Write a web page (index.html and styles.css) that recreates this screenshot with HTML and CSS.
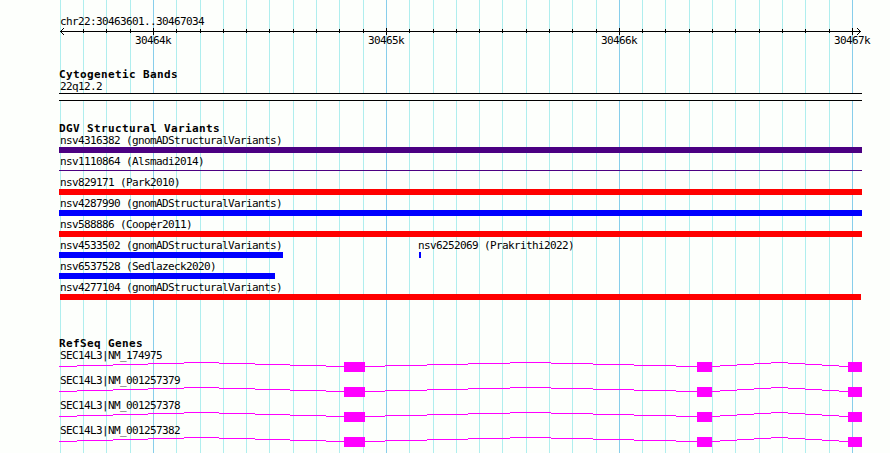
FILE: index.html
```html
<!DOCTYPE html>
<html lang="en">

<head>
    <meta charset="UTF-8">
    <title>chr22:30463601..30467034</title>
    <link rel="stylesheet" href="styles.css">
</head>

<body>
    <div class="browser">
        <!-- vertical grid, one line per 100 bp -->
        <svg class="grid" width="890" height="453" viewBox="0 0 890 453">
            <path class="minor" d="M60.5 0V453M83.5 0V453M106.5 0V453M130.5 0V453M176.5 0V453M200.5 0V453M223.5 0V453M246.5 0V453M269.5 0V453M293.5 0V453M316.5 0V453M339.5 0V453M363.5 0V453M409.5 0V453M433.5 0V453M456.5 0V453M479.5 0V453M502.5 0V453M526.5 0V453M549.5 0V453M572.5 0V453M596.5 0V453M642.5 0V453M665.5 0V453M689.5 0V453M712.5 0V453M735.5 0V453M759.5 0V453M782.5 0V453M805.5 0V453M829.5 0V453" />
            <path class="major" d="M153.5 0V453M386.5 0V453M619.5 0V453M852.5 0V453" />
        </svg>

        <div class="ruler">
            <div class="label">chr22:30463601..30467034</div>
            <svg class="axis" width="803" height="6" viewBox="59 28 803 6">
                <path d="M60 31.5H861" />
                <path d="M83.5 29v4M106.5 29v4M130.5 29v4M176.5 29v4M200.5 29v4M223.5 29v4M246.5 29v4M269.5 29v4M293.5 29v4M316.5 29v4M339.5 29v4M363.5 29v4M409.5 29v4M433.5 29v4M456.5 29v4M479.5 29v4M502.5 29v4M526.5 29v4M549.5 29v4M572.5 29v4M596.5 29v4M642.5 29v4M665.5 29v4M689.5 29v4M712.5 29v4M735.5 29v4M759.5 29v4M782.5 29v4M805.5 29v4M829.5 29v4" />
                <path d="M153.5 28v7M386.5 28v7M619.5 28v7M852.5 28v7" />
                <path d="M61 30.5h1M62 29.5h1M63 28.5h1M61 32.5h1M62 33.5h1M63 34.5h1M859 30.5h1M858 29.5h1M857 28.5h1M859 32.5h1M858 33.5h1M857 34.5h1" />
            </svg>
            <div class="ticks">
                <span>30464k</span>
                <span>30465k</span>
                <span>30466k</span>
                <span>30467k</span>
            </div>
        </div>

        <div class="track cyto">
            <div class="title">Cytogenetic Bands</div>
            <div class="label">22q12.2</div>
            <div class="band"></div>
        </div>

        <div class="track variants">
            <div class="title">DGV Structural Variants</div>
            <div class="row">
                <div class="feature full">
                    <div class="label">nsv4316382 (gnomADStructuralVariants)</div>
                    <div class="bar purple"></div>
                </div>
            </div>
            <div class="row">
                <div class="feature full">
                    <div class="label">nsv1110864 (Alsmadi2014)</div>
                    <div class="bar thin"></div>
                </div>
            </div>
            <div class="row">
                <div class="feature full">
                    <div class="label">nsv829171 (Park2010)</div>
                    <div class="bar red"></div>
                </div>
            </div>
            <div class="row">
                <div class="feature full">
                    <div class="label">nsv4287990 (gnomADStructuralVariants)</div>
                    <div class="bar blue"></div>
                </div>
            </div>
            <div class="row">
                <div class="feature full">
                    <div class="label">nsv588886 (Cooper2011)</div>
                    <div class="bar red"></div>
                </div>
            </div>
            <div class="row">
                <div class="feature nsv4533502">
                    <div class="label">nsv4533502 (gnomADStructuralVariants)</div>
                    <div class="bar blue"></div>
                </div>
                <div class="feature nsv6252069">
                    <div class="label">nsv6252069 (Prakrithi2022)</div>
                    <div class="bar blue"></div>
                </div>
            </div>
            <div class="row">
                <div class="feature nsv6537528">
                    <div class="label">nsv6537528 (Sedlazeck2020)</div>
                    <div class="bar blue"></div>
                </div>
            </div>
            <div class="row">
                <div class="feature full">
                    <div class="label">nsv4277104 (gnomADStructuralVariants)</div>
                    <div class="bar red inset"></div>
                </div>
            </div>
        </div>

        <div class="track genes">
            <div class="title">RefSeq Genes</div>
            <div class="label">SEC14L3|NM_174975</div>
            <svg class="gene" width="803" height="12" viewBox="59 0 803 12">
                <g id="transcript">
                    <path class="intron" d="M59 4.5H77M77 3.5H113M113 2.5H148M148 1.5H184M184 .5H219M219 1.5H255M255 2.5H290M290 3.5H326M326 4.5H344" />
                    <path class="intron" d="M365 4.5H385M385 3.5H427M427 2.5H468M468 1.5H510M510 .5H551M551 1.5H593M593 2.5H634M634 3.5H676M676 4.5H697" />
                    <path class="intron" d="M712 4.5H720M720 3.5H737M737 2.5H754M754 1.5H771M771 .5H788M788 1.5H805M805 2.5H822M822 3.5H839M839 4.5H848" />
                    <path class="exon" d="M344 0h21v10h-21zM697 0h15v10h-15zM848 0h14v10h-14z" />
                </g>
            </svg>
            <div class="label">SEC14L3|NM_001257379</div>
            <svg class="gene" width="803" height="12" viewBox="59 0 803 12"><use href="#transcript" /></svg>
            <div class="label">SEC14L3|NM_001257378</div>
            <svg class="gene" width="803" height="12" viewBox="59 0 803 12"><use href="#transcript" /></svg>
            <div class="label">SEC14L3|NM_001257382</div>
            <svg class="gene" width="803" height="12" viewBox="59 0 803 12"><use href="#transcript" /></svg>
        </div>
    </div>
</body>

</html>
```
FILE: styles.css
```css
body {
    margin: 0;
    background-color: #fdfffc;
    color: #000;
    font-family: "DejaVu Sans Mono", monospace;
    font-size: 11px;
    line-height: 13px;
}

svg {
    display: block;
    shape-rendering: crispEdges;
}

.browser {
    position: relative;
    box-sizing: border-box;
    width: 890px;
    height: 453px;
    padding: 15px 28px 0 59px;
    overflow: hidden;
}

/* Grid behind the tracks */
.grid {
    position: absolute;
    top: 0;
    left: 0;
    z-index: -1;
}

.minor {
    stroke: #afeeee;
}

.major {
    stroke: #87ceeb;
}

/* Text */
.label,
.ticks {
    height: 13px;
    letter-spacing: -0.622px;
    white-space: nowrap;
}

.label {
    padding-left: 1px;
}

.title {
    height: 12px;
    font-weight: bold;
    letter-spacing: 0.378px;
    white-space: nowrap;
}

/* Ruler */
.axis {
    overflow: visible;
    stroke: #000;
}

.ticks {
    display: flex;
    gap: 197px;
    padding-left: 76px;
}

.ticks span {
    flex: none;
    width: 36px;
}

/* Tracks */
.cyto {
    margin-top: 21px;
}

.variants {
    margin-top: 21px;
}

.genes {
    margin-top: 35px;
}

.band {
    height: 6px;
    border-top: 1px solid #000;
    border-bottom: 1px solid #000;
    background-color: #fdfffc;
}

/* Structural variants */
.row {
    display: flex;
    height: 21px;
}

.feature {
    flex: none;
}

.full {
    width: 803px;
}

.nsv4533502 {
    width: 224px;
}

.nsv6252069 {
    width: 3px;
    margin-left: 135px;
}

.nsv6252069 .label {
    padding-left: 0;
}

.nsv6252069 .bar {
    margin-left: 1px;
}

.nsv6537528 {
    width: 216px;
}

.bar {
    height: 6px;
}

.purple {
    background-color: #4b0082;
}

.red {
    background-color: #ff0000;
}

.blue {
    background-color: #0000ff;
}

.thin {
    height: 1px;
    margin-top: 10px;
    background-color: #4b0082;
}

.thin {
    margin-top: 2px;
}

.inset {
    margin: 0 1px;
}

/* Genes */
.intron {
    fill: none;
    stroke: #ff00ff;
}

.exon {
    fill: #ff00ff;
}
```
